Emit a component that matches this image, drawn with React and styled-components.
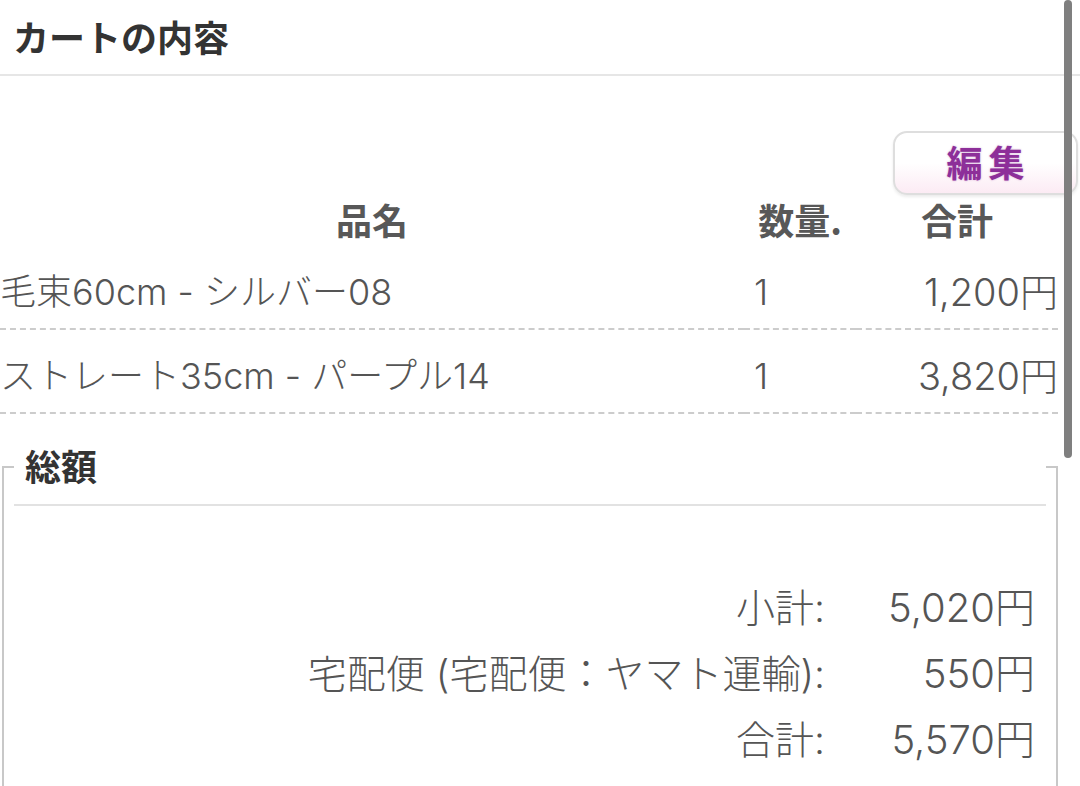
import React from "react";
import styled, { createGlobalStyle } from "styled-components";

const items = [
  { name: "毛束60cm - シルバー08", qty: 1, total: "1,200円" },
  { name: "ストレート35cm - パープル14", qty: 1, total: "3,820円" },
];

const summary = [
  { label: "小計:", value: "5,020円" },
  { label: "宅配便 (宅配便：ヤマト運輸):", value: "550円" },
  { label: "合計:", value: "5,570円" },
];

function App() {
  return (
    <Page>
      <GlobalStyle />
      <Header>
        <Title>カートの内容</Title>
      </Header>

      <ButtonRow>
        <EditButton type="button">編集</EditButton>
      </ButtonRow>

      <CartTable>
        <HeadCell>品名</HeadCell>
        <HeadCell>数量.</HeadCell>
        <HeadCell>合計</HeadCell>
        {items.map((item) => (
          <React.Fragment key={item.name}>
            <Cell>{item.name}</Cell>
            <Cell qty>{item.qty}</Cell>
            <Cell right>{item.total}</Cell>
          </React.Fragment>
        ))}
      </CartTable>

      <Totals>
        <Legend>総額</Legend>
        <SummaryGrid>
          {summary.map((row) => (
            <React.Fragment key={row.label}>
              <SummaryLabel>{row.label}</SummaryLabel>
              <SummaryValue>{row.value}</SummaryValue>
            </React.Fragment>
          ))}
        </SummaryGrid>
      </Totals>

      <Scrollbar />
    </Page>
  );
}

export default App;

const GlobalStyle = createGlobalStyle`
  html, body {
    margin: 0;
    padding: 0;
    background: #ffffff;
  }
  body {
    font-family: Inter, "Noto Sans CJK JP", sans-serif;
    color: #5a5a5a;
  }
  * {
    box-sizing: border-box;
  }
`;

const Page = styled.div`
  position: relative;
  width: 1080px;
  height: 786px;
  overflow: hidden;
  background: #ffffff;
`;

const Header = styled.header`
  display: flex;
  align-items: center;
  height: 76px;
  padding: 0 13px 2px;
  border-bottom: 2px solid #e6e6e6;
`;

const Title = styled.h2`
  margin: 0;
  font-family: "Noto Sans CJK JP", sans-serif;
  font-size: 36px;
  line-height: 44px;
  font-weight: 700;
  color: #333333;
`;

const ButtonRow = styled.div`
  display: flex;
  justify-content: flex-end;
  padding: 55px 2px 0 0;
`;

const EditButton = styled.button`
  width: 185px;
  height: 64px;
  border: 2px solid #dedede;
  border-radius: 14px;
  background: linear-gradient(#ffffff 50%, #fcebf4 100%);
  box-shadow: 0 2px 3px rgba(0, 0, 0, 0.08);
  font-family: "Noto Sans CJK JP", sans-serif;
  font-size: 36px;
  line-height: 44px;
  font-weight: 700;
  letter-spacing: 6px;
  padding: 0 0 4px 6px;
  color: #8d2f99;
  text-shadow: 0 0 2px rgba(141, 47, 153, 0.45);
  cursor: pointer;
`;

const CartTable = styled.div`
  display: grid;
  grid-template-columns: 744px 112px 1fr;
  width: 1058px;
`;

const HeadCell = styled.div`
  text-align: center;
  font-family: "Noto Sans CJK JP", sans-serif;
  font-size: 36px;
  line-height: 44px;
  font-weight: 700;
  color: #585858;
  padding: 2px 0 5px;
`;

const Cell = styled.div`
  font-size: ${(p) => (p.right ? "38px" : "36px")};
  line-height: 44px;
  font-weight: 300;
  color: #555555;
  padding: 24px 0 14px ${(p) => (p.qty ? "10px" : "0")};
  text-align: ${(p) => (p.right ? "right" : "left")};
  white-space: nowrap;
  border-bottom: 2px dashed #cccccc;
`;

const Totals = styled.fieldset`
  width: 1056px;
  margin: 14px 0 0 2px;
  padding: 0 10px 40px;
  border: 2px solid #c8c8c8;
  min-width: 0;
`;

const Legend = styled.legend`
  width: 100%;
  margin: 0;
  padding: 15px 0 17px 11px;
  font-family: "Noto Sans CJK JP", sans-serif;
  font-size: 36px;
  line-height: 44px;
  font-weight: 700;
  color: #333333;
  background: #ffffff;
  border-bottom: 2px solid #e2e2e2;
`;

const SummaryGrid = styled.div`
  display: grid;
  grid-template-columns: 1fr 210px;
  padding: 80px 11px 0 0;
  row-gap: 22px;
`;

const SummaryLabel = styled.div`
  text-align: right;
  font-size: 39px;
  line-height: 44px;
  font-weight: 300;
  color: #555555;
  white-space: nowrap;
`;

const SummaryValue = styled(SummaryLabel)`
  font-size: 40px;
`;

const Scrollbar = styled.div`
  position: absolute;
  top: 0;
  right: 8px;
  width: 8px;
  height: 458px;
  border-radius: 4px;
  background: #7f7f7f;
`;
